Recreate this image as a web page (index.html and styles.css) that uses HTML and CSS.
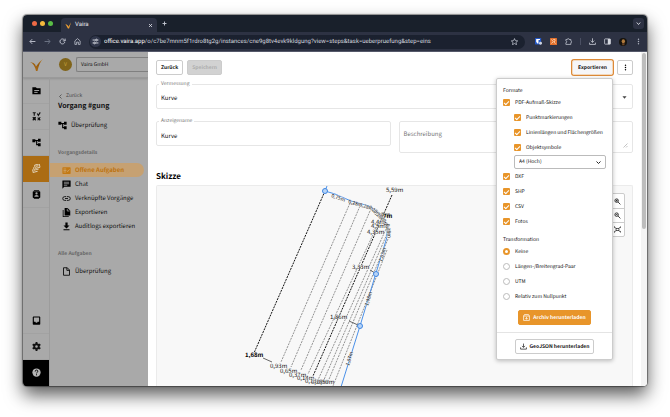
FILE: index.html
```html
<!DOCTYPE html>
<html lang="de">
<head>
<meta charset="utf-8">
<title>Vaira</title>
<link rel="stylesheet" href="styles.css">
</head>
<body>
<div class="window">
  <div class="tabstrip">
    <span class="light red"></span><span class="light yellow"></span><span class="light green"></span>
    <div class="tab">
      <svg class="i7" viewBox="0 0 24 24"><path d="M1 6l8 5 3 5L21 1l-7 21h-4z" fill="#f0a030"/></svg>
      <span class="tab-title">Vaira</span>
      <button class="ghost" aria-label="Tab schließen"><svg class="i5" viewBox="0 0 10 10"><path d="M2 2l6 6M8 2l-6 6" stroke="#dfe2ea" stroke-width="1.6"/></svg></button>
    </div>
    <button class="ghost new-tab" aria-label="Neuer Tab"><svg class="i5" viewBox="0 0 10 10"><path d="M5 1v8M1 5h8" stroke="#c9cdd8" stroke-width="1.8"/></svg></button>
    <button class="ghost tab-search" aria-label="Tabs suchen"><svg class="i5" viewBox="0 0 10 10"><path d="M1.500 3l3.500 4 3.500-4" fill="none" stroke="#dfe2ea" stroke-width="1.800"/></svg></button>
  </div>
  <div class="toolbar">
    <button class="ghost" aria-label="Zurück"><svg class="i7" viewBox="0 0 24 24"><path d="M22 12H4M11 4l-8 8 8 8" fill="none" stroke="#c9cdd8" stroke-width="3"/></svg></button>
    <button class="ghost" aria-label="Vorwärts"><svg class="i7" viewBox="0 0 24 24"><path d="M2 12h18M13 4l8 8-8 8" fill="none" stroke="#747a8c" stroke-width="3"/></svg></button>
    <button class="ghost" aria-label="Neu laden"><svg class="i7" viewBox="0 0 24 24"><path d="M20 14a8.500 8.500 0 1 1-2-8l3 3M21 2v8h-8" fill="none" stroke="#c9cdd8" stroke-width="3"/></svg></button>
    <button class="ghost" aria-label="Startseite"><svg class="i7" viewBox="0 0 24 24"><path d="M3 10l9-8 9 8v12h-6v-8H9v8H3z" fill="none" stroke="#c9cdd8" stroke-width="2.500"/></svg></button>
    <div class="address">
      <span class="site"><svg class="i7" viewBox="0 0 24 24"><path d="M2 7h9M18 7h4M2 17h4M13 17h9" stroke="#e2e5ec" stroke-width="3"/><circle cx="15" cy="7" r="3" fill="none" stroke="#e2e5ec" stroke-width="3"/><circle cx="9" cy="17" r="3" fill="none" stroke="#e2e5ec" stroke-width="3"/></svg></span>
      <span class="url"><b>office.vaira.app</b>/o/c7be7mnm5f1rdro8tg2g/instances/cne9g8tv4evk9kldgung?view=steps&amp;task=ueberpruefung&amp;step=eins</span>
      <button class="ghost" aria-label="Lesezeichen"><svg class="i7" viewBox="0 0 24 24"><path d="M12 2l3 7 8 1-6 5 2 8-7-4-7 4 2-8-6-5 8-1z" fill="none" stroke="#c9cdd8" stroke-width="2.500"/></svg></button>
    </div>
    <div class="extensions">
      <svg class="i7" viewBox="0 0 24 24"><rect width="21" height="22" rx="2" fill="#2458c8"/><path d="M4 3h13v4h-5v12H8L4 13z" fill="#fff"/><circle cx="19" cy="18" r="5" fill="#cfd4df"/></svg>
      <svg class="i7" viewBox="0 0 24 24"><rect width="24" height="24" rx="2" fill="#e2702c"/><path d="M5 5l6 7-6 7M11 5h6v5l-4 4 6 5" fill="none" stroke="#ffd9b8" stroke-width="3"/></svg>
      <svg class="i7" viewBox="0 0 24 24"><path d="M3 5h5a3 3 0 0 1 6 0h6v5a3 3 0 0 1 0 6v6H3v-6a3 3 0 0 0 0-6z" fill="none" stroke="#c9cdd8" stroke-width="2.500"/></svg>
      <span class="bar"></span>
      <svg class="i7" viewBox="0 0 24 24"><path d="M12 1v14M6 9l6 6 6-6M2 16v6h20v-6" fill="none" stroke="#d5d8e0" stroke-width="2.600"/></svg>
      <svg class="i7" viewBox="0 0 24 24"><rect x="2" y="3" width="20" height="18" rx="2" fill="none" stroke="#d5d8e0" stroke-width="2.500"/><path d="M13 3h9v18h-9z" fill="#d5d8e0"/></svg>
      <svg class="i8" viewBox="0 0 24 24"><circle cx="12" cy="12" r="12" fill="#15130f"/><ellipse cx="13" cy="10" rx="5" ry="6" fill="#b07a3c"/><path d="M9 16h8l-1 6h-6z" fill="#6e4527"/></svg>
      <svg class="i7" viewBox="0 0 24 24"><circle cx="12" cy="4" r="2.500" fill="#aeb3c0"/><circle cx="12" cy="12" r="2.500" fill="#aeb3c0"/><circle cx="12" cy="20" r="2.500" fill="#aeb3c0"/></svg>
    </div>
  </div>

  <div class="app">
    <div class="behind">
      <header class="app-header">
        <div class="logo"><svg viewBox="0 0 26 24"><defs><linearGradient id="g" x1="0" x2="1" y1="1" y2="0"><stop offset="0" stop-color="#b9741a"/><stop offset=".6" stop-color="#94590c"/><stop offset="1" stop-color="#c08a3e"/></linearGradient></defs><path d="M0 6l7 2q4 2 5 7Q17 6 26 0q-8 8-11 24h-3Q9 10 0 6z" fill="url(#g)"/></svg></div>
        <span class="avatar">V</span>
        <button class="org">Vaira GmbH</button>
      </header>
      <div class="columns">
        <nav class="rail" aria-label="Hauptmenü">
          <a href="#" aria-label="Projekte"><svg viewBox="0 0 24 24"><path d="M1 3h9l3 3h10v16H1z"/><path d="M6 12h13M6 17h9" stroke="#a9a9a9" stroke-width="2.500"/></svg></a>
          <a href="#" aria-label="Werkzeuge"><svg viewBox="0 0 24 24" fill="none" stroke="#111" stroke-width="3"><path d="M2 2h8M6 2v8M2 14l8 8M10 14l-8 8M14 4l3 5 5-8M15 15l7 7M22 14l-7 8"/><circle cx="6" cy="17" r="2"/></svg></a>
          <a href="#" aria-label="Abläufe"><svg viewBox="0 0 24 24"><path d="M1 3h8v8H1zM16 2h7v8h-7zM16 14h7v8h-7zM9 5h7v3H9zM11 6h3v13h-3zM12 16h4v3h-4z"/></svg></a>
          <a href="#" class="active" aria-label="Vorgänge"><svg viewBox="0 0 24 24" fill="none" stroke="#e3d3b8" stroke-width="2.600"><g transform="rotate(-14 12 12)"><rect x="9" y="2" width="13" height="9" rx="2"/><path d="M12 6h7M5 7v8h12M1 12v8h12"/></g></svg></a>
          <a href="#" aria-label="Kontakte"><svg viewBox="0 0 24 24"><rect x="2" y="3" width="20" height="18" rx="2"/><path d="M5 0h14v2H5zM5 22h14v2H5z"/><circle cx="12" cy="9" r="3" fill="#a9a9a9"/><path d="M6 18q0-5 6-5t6 5z" fill="#a9a9a9"/></svg></a>
          <span class="grow"></span>
          <a href="#" aria-label="Posteingang"><svg viewBox="0 0 24 24"><path fill-rule="evenodd" d="M2 3q0-2 2-2h16q2 0 2 2v18q0 2-2 2H4q-2 0-2-2zM5 4v11h4q0 3 3 3t3-3h4V4z"/></svg></a>
          <a href="#" aria-label="Einstellungen"><svg viewBox="0 0 24 24"><circle cx="12" cy="12" r="6" fill="none" stroke="#111" stroke-width="5"/><path d="M12 0v5M12 19v5M2 6l4 3M18 15l4 3M2 18l4-3M18 9l4-3" stroke="#111" stroke-width="5"/></svg></a>
          <a href="#" class="help" aria-label="Hilfe"><svg viewBox="0 0 24 24"><circle cx="12" cy="12" r="11" fill="#b5b5b5"/><path d="M8.500 9.500q0-4 3.500-4t3.500 3q0 2-2 3.200-1.500 1-1.500 2.800M12 16.500v3" fill="none" stroke="#000" stroke-width="2.400"/></svg></a>
        </nav>
        <aside class="side">
          <a href="#" class="back"><svg class="i5" viewBox="0 0 10 10"><path d="M7 1L3 5l4 4" fill="none" stroke="#444" stroke-width="1.500"/></svg>Zurück</a>
          <h1>Vorgang #gung</h1>
          <a href="#" class="overview"><svg class="i9" viewBox="0 0 24 24"><path d="M1 2h8v8H1zM16 2h7v8h-7zM16 14h7v8h-7zM9 5h7v3H9zM11 6h3v13h-3zM12 16h4v3h-4z"/></svg>Überprüfung</a>
          <h2>Vorgangsdetails</h2>
          <nav class="items">
            <a href="#" class="current"><svg class="i9" viewBox="0 0 24 24"><rect x="1" y="3" width="22" height="18" rx="2" fill="#c47a14"/><path d="M4 8h7M4 12h7M4 16h7M13 12l2 3 5-6" fill="none" stroke="#cda877" stroke-width="2"/></svg>Offene Aufgaben</a>
            <a href="#"><svg class="i9" viewBox="0 0 24 24"><path d="M2 1h20q1 0 1 1v16H6l-5 5V2q0-1 1-1z"/><path d="M5 6h14M5 10h14M5 14h9" stroke="#a9a9a9" stroke-width="2"/></svg>Chat</a>
            <a href="#"><svg class="i9" viewBox="0 0 24 24"><path d="M11 7H7a5 5 0 0 0 0 10h4M13 7h4a5 5 0 0 1 0 10h-4M8 12h8" fill="none" stroke="#111" stroke-width="2.500"/></svg>Verknüpfte Vorgänge</a>
            <a href="#"><svg class="i9" viewBox="0 0 24 24"><path d="M2 5h2v17h14v2H2zM7 0h8l7 7v13H7z"/><path d="M14 2v6h6" stroke="#a9a9a9" stroke-width="2" fill="none"/></svg>Exportieren</a>
            <a href="#"><svg class="i9" viewBox="0 0 24 24"><path d="M9 1h6v8h5l-8 8-8-8h5zM4 19h16v3H4z"/></svg>Auditlogs exportieren</a>
          </nav>
          <h2>Alle Aufgaben</h2>
          <nav class="items">
            <a href="#"><svg class="i9" viewBox="0 0 24 24"><path d="M4 2h10l6 6v14H4zM13 2v7h7" fill="none" stroke="#111" stroke-width="2.500"/></svg>Überprüfung</a>
          </nav>
        </aside>
      </div>
    </div>

    <main class="drawer">
      <div class="content">
        <div class="actions">
          <button class="btn">Zurück</button>
          <button class="btn off" disabled>Speichern</button>
          <span class="grow"></span>
          <div class="export">
            <button class="btn focus">Exportieren</button>
            <form class="menu">
              <h3>Formate</h3>
              <label><input type="checkbox" checked>PDF-Aufmaß-Skizze</label>
              <div class="nested">
                <label><input type="checkbox" checked>Punktmarkierungen</label>
                <label><input type="checkbox" checked>Linienlängen und Flächengrößen</label>
                <label><input type="checkbox" checked>Objektsymbole</label>
                <div class="paper">
                  <select aria-label="Papierformat"><option>A4 (Hoch)</option></select>
                  <svg class="i5" viewBox="0 0 10 10"><path d="M1 3l4 4 4-4" fill="none" stroke="#222" stroke-width="2"/></svg>
                </div>
              </div>
              <label><input type="checkbox" checked>DXF</label>
              <label><input type="checkbox" checked>SHP</label>
              <label><input type="checkbox" checked>CSV</label>
              <label><input type="checkbox" checked>Fotos</label>
              <h3 class="second">Transformation</h3>
              <label><input type="radio" name="t" checked>Keine</label>
              <label><input type="radio" name="t">Längen-/Breitengrad-Paar</label>
              <label><input type="radio" name="t">UTM</label>
              <label><input type="radio" name="t">Relativ zum Nullpunkt</label>
              <button type="button" class="btn primary"><svg class="i7" viewBox="0 0 24 24" fill="none" stroke="#fff" stroke-width="2.500"><path d="M2 7h20v15H2zM2 7l3-5h14l3 5M12 10v8M8 14l4 4 4-4"/></svg>Archiv herunterladen</button>
              <hr>
              <button type="button" class="btn geo"><svg class="i7" viewBox="0 0 24 24" fill="none" stroke="#222" stroke-width="2.500"><path d="M12 2v13M7 10l5 5 5-5M2 15v6h20v-6"/></svg>GeoJSON herunterladen</button>
            </form>
          </div>
          <button class="btn more" aria-label="Mehr"><svg class="i7" viewBox="0 0 24 24"><circle cx="12" cy="4" r="2.500"/><circle cx="12" cy="12" r="2.500"/><circle cx="12" cy="20" r="2.500"/></svg></button>
        </div>
        <div class="field">
          <label for="survey">Vermessung</label>
          <select id="survey"><option>Kurve</option></select>
          <svg class="i7 caret" viewBox="0 0 24 24"><path d="M5 8h14l-7 8z" fill="#444"/></svg>
        </div>
        <div class="pair">
          <div class="field">
            <label for="name">Anzeigename</label>
            <input id="name" type="text" value="Kurve">
          </div>
          <div class="field tall">
            <textarea aria-label="Beschreibung" placeholder="Beschreibung"></textarea>
            <svg class="i5 grip" viewBox="0 0 10 10"><path d="M1 9l8-8M6 9l3-3" stroke="#888"/></svg>
          </div>
        </div>
        <h2 class="title">Skizze</h2>
        <div class="canvas">
          <svg class="sketch" role="img" aria-label="Skizze">
            <g transform="translate(-157 -186)">
              <g class="dots">
                <path class="strong" d="M325 191L254 353"/>
                <path d="M350 203L281 362M360 206L291 367M370 211L301 370M378 224L308 374M386 229L318 380M387 234L323 382M388 239L327 384M387 250L333 386"/>
                <path class="strong" d="M392 195L313 376"/>
              </g>
              <path d="M263 358l9 4M349 321l9 4M370 270l5 3" class="lead"/>
              <path class="blue" d="M327 186l-2 5 10 3 16 7 18 5q15 9 18 22v9L376 273 360 326 341 387"/>
              <g class="node"><circle cx="325" cy="191" r="2.500"/><circle cx="376" cy="274" r="2.500"/><circle cx="360" cy="326" r="2.500"/></g>
              <g class="labels">
                <text x="386" y="192">5,59m</text>
                <text x="381" y="217" class="bold">7m</text><text x="383" y="218" class="bold">7m</text>
                <text x="371" y="224">4,4m</text><text x="371" y="228">4,5m</text>
                <text x="367" y="234">4,35m</text>
                <text x="352" y="269">3,33m</text>
                <text x="330" y="319">1,86m</text>
                <text x="245" y="357" class="bold">1,68m</text>
                <text x="270" y="368">0,93m</text><text x="280" y="373">0,65m</text><text x="289" y="377">0,37m</text><text x="297" y="380">0,14m</text><text x="305" y="383">0,13m</text><text x="311" y="384">0,28m</text><text x="317" y="384">0,50m</text>
              </g>
              <g class="labels small">
                <text transform="translate(331 197) rotate(20)">0,75m</text>
                <text transform="translate(348 203) rotate(16)">0,28m</text>
                <text transform="translate(359 206) rotate(18)">0,28m</text>
                <text transform="translate(368 208) rotate(35)">0,28m</text>
                <text transform="translate(373 212) rotate(45)">0,28m</text>
                <text transform="translate(378 215) rotate(55)">0,28m</text>
                <text transform="translate(382 220) rotate(65)">0,28m</text>
                <text transform="translate(386 224) rotate(82)">0,28m</text>
                <text transform="translate(382 262) rotate(-73)">1,03m</text>
                <text transform="translate(368 306) rotate(-73)">1,48m</text>
                <text transform="translate(349 366) rotate(-73)">1,87m</text>
              </g>
            </g>
          </svg>
          <div class="zoom">
            <button aria-label="Vergrößern"><svg class="i7" viewBox="0 0 24 24" fill="none" stroke="#222" stroke-width="3"><circle cx="9" cy="9" r="6"/><path d="M14 14l8 8M6 9h6M9 6v6"/></svg></button>
            <button aria-label="Verkleinern"><svg class="i7" viewBox="0 0 24 24" fill="none" stroke="#222" stroke-width="3"><circle cx="9" cy="9" r="6"/><path d="M14 14l8 8M6 9h6"/></svg></button>
            <button aria-label="Einpassen"><svg class="i7" viewBox="0 0 24 24" fill="none" stroke="#222" stroke-width="2.500"><path d="M1 7V2M1 2l5 5M23 2l-5 5M23 7V2M1 17v5l5-5M23 17v5l-5-5"/><rect x="7" y="8" width="10" height="8"/></svg></button>
          </div>
        </div>
      </div>
      <div class="scroll"><span></span></div>
    </main>
  </div>
</div>
</body>
</html>
```
FILE: styles.css
```css
* { box-sizing: border-box; }

body {
  margin: 0;
  height: 100vh;
  padding: 15px 23px 31px;
  display: flex;
  background: #fff;
  font: 6px/10px "Noto Sans CJK SC", "Noto Sans", sans-serif;
  text-rendering: geometricPrecision;
  color: #111;
}

button, input, select, textarea { font: inherit; color: inherit; text-rendering: inherit; }
a { color: inherit; text-decoration: none; }
h1, h2, h3 { margin: 0; }
svg { display: block; flex: none; }
.i5 { width: 5px; height: 5px; }
.i7 { width: 7px; height: 7px; }
.i8 { width: 8px; height: 8px; }
.i9 { width: 9px; height: 9px; }
.grow { flex: 1; }

.window {
  flex: 1;
  min-width: 0;
  display: flex;
  flex-direction: column;
  border-radius: 4px;
  overflow: hidden;
  box-shadow: 0 0 1px 1px rgba(0, 0, 0, .4), 0 9px 18px rgba(0, 0, 0, .65);
}

/* Browser chrome */
.ghost {
  border: 0;
  padding: 0;
  background: none;
  display: grid;
  place-items: center;
}
.tabstrip {
  height: 17px;
  flex: none;
  display: flex;
  align-items: center;
  padding: 0 3px 0 9px;
  background: #19202b;
}
.light { width: 5px; height: 5px; border-radius: 50%; margin-right: 3px; }
.red { background: #ed6a45; }
.yellow { background: #f5b93c; }
.green { background: #59bd45; }
.tab {
  align-self: flex-end;
  width: 96px;
  height: 14px;
  margin-left: 5px;
  padding: 0 4px;
  display: flex;
  align-items: center;
  gap: 3px;
  border-radius: 4px 4px 0 0;
  background: #2d3243;
  color: #e4e6ec;
  font: 6px/10px Roboto, sans-serif;
}
.tab-title { flex: 1; }
.new-tab { margin-left: 5px; }
.tab-search {
  width: 11px;
  height: 11px;
  margin-left: auto;
  border-radius: 3px;
  background: #2d3243;
}
.toolbar {
  height: 20px;
  flex: none;
  display: flex;
  align-items: center;
  gap: 8px;
  padding: 0 5px 0 6px;
  background: #2d3243;
  border-bottom: 1px solid #55596a;
}
.extensions { display: flex; align-items: center; gap: 8px; margin-left: 2px; }
.address {
  flex: 1;
  min-width: 0;
  height: 14px;
  display: flex;
  align-items: center;
  gap: 3px;
  padding: 0 7px 0 1px;
  border-radius: 7px;
  background: #1b212f;
  color: #d4d7df;
  font: 6px/10px Roboto, sans-serif;
}
.site {
  width: 11px;
  height: 11px;
  display: grid;
  place-items: center;
  border-radius: 50%;
  background: #30364a;
}
.url { flex: 1; min-width: 0; overflow: hidden; white-space: nowrap; }
.url b { font-weight: 400; color: #fff; }
.bar { width: 1px; height: 7px; background: #4b5063; }

/* Dimmed application */
.app { flex: 1; min-height: 0; display: flex; }
.behind {
  width: 125px;
  flex: none;
  display: flex;
  flex-direction: column;
  background: #a9a9a9;
  color: #111;
}
.app-header {
  height: 26px;
  flex: none;
  display: flex;
  align-items: center;
  border-bottom: 1px solid #9a9a9a;
  box-shadow: 0 1px 2px rgba(0, 0, 0, .15);
}
.logo { width: 27px; display: grid; place-items: center; }
.logo svg { width: 13px; height: 12px; }
.avatar {
  width: 13px;
  height: 13px;
  margin: 0 4px 0 9px;
  border-radius: 50%;
  background: #80641a;
  color: #c9a63e;
  font-size: 5px;
  line-height: 13px;
  text-align: center;
}
.org {
  flex: 1;
  height: 15px;
  padding: 0 4px;
  border: 1px solid #808080;
  border-right: 0;
  border-radius: 2px 0 0 2px;
  background: none;
  text-align: left;
  font-size: 5px;
  line-height: 10px;
}
.columns { flex: 1; min-height: 0; display: flex; }
.rail {
  width: 27px;
  display: flex;
  flex-direction: column;
  border-right: 1px solid #9c9c9c;
}
.rail a {
  height: 26px;
  display: grid;
  place-items: center;
  border-bottom: 1px solid #a2a2a2;
}
.rail svg { width: 9px; height: 9px; }
.rail .active { background: #ab6c13; border-color: #ab6c13; }
.rail .help { background: #000; border-color: #000; }
.side { flex: 1; padding: 13px 4px 0 0; }
.side a { display: flex; align-items: center; white-space: nowrap; }
.side .back { height: 10px; padding-left: 8px; gap: 3px; font-size: 5px; color: #444; }
.side h1 { padding-left: 8px; font-size: 7px; line-height: 10px; }
.side .overview { height: 14px; margin-top: 7px; padding-left: 8px; gap: 4px; }
.side h2 {
  margin-top: 16px;
  padding-left: 8px;
  font-size: 5px;
  line-height: 10px;
  font-weight: 700;
  color: #666;
}
.items { padding-top: 5px; }
.items a { height: 14px; padding-left: 12px; gap: 4px; }
.items .current {
  border-radius: 0 7px 7px 0;
  background: #c6a172;
  color: #bd7310;
  font-weight: 700;
}

/* Drawer */
.drawer { flex: 1; min-width: 0; display: flex; background: #fff; }
.content {
  flex: 1;
  min-width: 0;
  display: flex;
  flex-direction: column;
  padding: 8px 8px 0;
}
.actions { display: flex; align-items: center; gap: 4px; }
.btn {
  height: 15px;
  padding: 0 4px;
  display: flex;
  align-items: center;
  justify-content: center;
  gap: 3px;
  border: 1px solid #ccc;
  border-radius: 2px;
  background: #fff;
  font-size: 5px;
  line-height: 10px;
  font-weight: 700;
  white-space: nowrap;
}
.btn.off { background: #d2d2d2; color: #adadad; }
.btn.focus {
  padding: 0 5px;
  border-color: #f3d9bd;
  background: #f6f6f8;
  box-shadow: 0 0 0 1px #dd8a38;
}
.btn.more { width: 16px; padding: 0; }
.export { position: relative; }

.field { position: relative; flex: 1; height: 25px; }
.actions + .field { flex: none; margin-top: 9px; }
.field label {
  position: absolute;
  top: -4px;
  left: 3px;
  padding: 0 2px;
  background: #fff;
  color: #777;
  font-size: 5px;
  line-height: 8px;
}
.field input, .field select, .field textarea {
  display: block;
  width: 100%;
  height: 100%;
  padding: 3px 4px 0;
  border: 1px solid #e6e6e6;
  border-radius: 2px;
  background: #fff;
  appearance: none;
  resize: none;
}
.field textarea { padding-top: 7px; }
.field textarea::placeholder { color: #777; }
.field.tall { height: 32px; }
.caret { position: absolute; right: 5px; top: 10px; }
.grip { position: absolute; right: 5px; bottom: 5px; }
.pair { display: flex; align-items: flex-start; gap: 8px; margin-top: 12px; }
.title { margin: 18px 0 2px; font-size: 8px; line-height: 12px; color: #000; }
.canvas {
  position: relative;
  flex: 1;
  min-height: 0;
  border: 1px solid #ebebeb;
  border-bottom: 0;
  border-radius: 2px 2px 0 0;
  background: #f8f8f8;
}
.sketch { width: 100%; height: 100%; overflow: hidden; }
.dots { fill: none; stroke: #666; stroke-width: 1; stroke-dasharray: 2 1; }
.dots path { stroke-opacity: .7; }
.dots .strong { stroke: #111; stroke-opacity: 1; }
.lead { fill: none; stroke: #666; }
.blue { fill: none; stroke: #4a90e8; stroke-width: 1; }
.node circle { fill: #b7d4f7; stroke: #3f86e2; stroke-width: 1; }
.labels {
  font-size: 6px;
  fill: #111;
  stroke: #f8f8f8;
  stroke-width: 1;
  stroke-opacity: .6;
  paint-order: stroke;
}
.labels.small { font-size: 5px; }
.labels .bold { font-weight: 700; fill: #000; }
.zoom {
  position: absolute;
  top: 7px;
  right: 7px;
  border: 1px solid #ccc;
  border-radius: 2px;
  background: #fff;
}
.zoom button {
  width: 14px;
  height: 14px;
  padding: 0;
  display: grid;
  place-items: center;
  border: 0;
  background: none;
}
.zoom button + button { border-top: 1px solid #ccc; }
.scroll { width: 6px; padding: 1px; background: #f4f4f4; }
.scroll span { display: block; height: 53%; border-radius: 2px; background: #bdbdbd; }

/* Export menu */
.menu {
  position: absolute;
  z-index: 2;
  top: 18px;
  right: 0;
  width: 117px;
  padding: 7px 6px 5px;
  border: 1px solid #ccc;
  border-radius: 2px;
  background: #fff;
  box-shadow: 0 1px 4px rgba(0, 0, 0, .25);
  font-size: 5px;
}
.menu h3 { font-size: 5px; line-height: 9px; font-weight: 400; }
.menu .second { margin-top: 6px; }
.menu label {
  height: 15px;
  display: flex;
  align-items: center;
  gap: 5px;
  white-space: nowrap;
}
.menu input {
  appearance: none;
  flex: none;
  width: 7px;
  height: 7px;
  margin: 0;
  border-radius: 1px;
  display: grid;
  place-items: center;
}
.menu [type="checkbox"]:checked { background: #e8952a; }
.menu [type="checkbox"]:checked::before {
  content: "";
  width: 4px;
  height: 2px;
  border: solid #fff;
  border-width: 0 0 1px 1px;
  transform: rotate(-45deg);
}
.menu [type="radio"] { border: 1px solid #bbb; border-radius: 50%; }
.menu [type="radio"]:checked { border: 2px solid #e8952a; }
.nested { padding-left: 11px; }
.paper { position: relative; }
.paper select {
  display: block;
  width: 100%;
  height: 14px;
  padding: 0 4px;
  border: 1px solid #bbb;
  border-radius: 2px;
  background: #fff;
  appearance: none;
}
.paper svg { position: absolute; right: 5px; top: 5px; }
.menu .btn { margin: 6px auto 0; }
.menu .primary { border-color: #e8952a; background: #e8952a; color: #fff; }
.menu hr { height: 1px; margin: 7px -6px 0; border: 0; background: #e4e4e4; }
```
